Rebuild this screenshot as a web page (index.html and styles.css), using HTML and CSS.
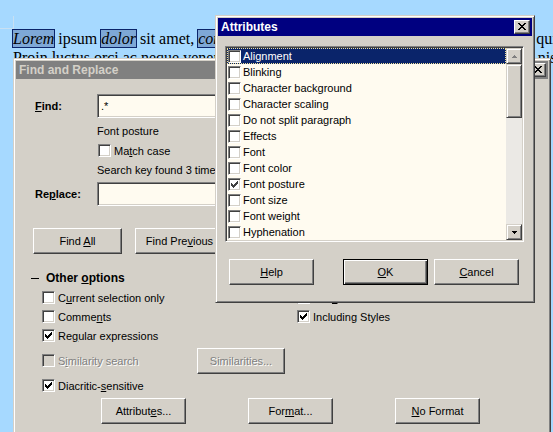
FILE: index.html
```html
<!DOCTYPE html>
<html>
<head>
<meta charset="utf-8">
<title>Find and Replace</title>
<link rel="stylesheet" href="styles.css">
</head>
<body>
<div class="doc">
  <div class="corner"></div>
  <p class="text"><span class="hl">Lorem</span> ipsum <span class="hl">dolor</span> sit amet, <span class="hl">consectetur</span> adipiscing elit. Nullam dapibus, ut diam quis<br>Proin luctus orci ac neque venenatis, vel vehicula leo mattis vitae. Aenean lacinia nisi</p>
</div>

<div class="win fr">
  <div class="title inactive">
    <span class="title-text">Find and Replace</span>
    <span class="xbtn"><svg width="8" height="7" viewBox="0 0 8 7"><path d="M0 0h2v1H0zM6 0h2v1H6zM1 1h2v1H1zM5 1h2v1H5zM2 2h4v1H2zM3 3h2v1H3zM2 4h4v1H2zM1 5h2v1H1zM5 5h2v1H5zM0 6h2v1H0zM6 6h2v1H6z" fill="#000"/></svg></span>
  </div>
  <div class="fr-body">
    <div class="field-row first">
      <span class="lbl"><u>F</u>ind:</span>
      <div class="field"><span>.*</span></div>
    </div>
    <div class="sub">
      <div class="note n1">Font posture</div>
      <div class="inline-checks">
        <span class="cb-item"><span class="cb"></span><span>Ma<u>t</u>ch case</span></span>
        <span class="cb-item dis"><span class="cb"></span><span>Whole words only</span></span>
      </div>
      <div class="note n2">Search key found 3 times</div>
    </div>
    <div class="field-row second">
      <span class="lbl">Re<u>p</u>lace:</span>
      <div class="field"></div>
    </div>
    <div class="btn-row">
      <div class="btn w89"><span>Find <u>A</u>ll</span></div>
      <div class="btn w89"><span>Find Pre<u>v</u>ious</span></div>
      <div class="btn w89"><span>Find <u>N</u>ext</span></div>
    </div>
    <div class="section"><span class="dash"></span><span>Other <u>o</u>ptions</span></div>
    <div class="opts">
      <span class="cb-item"><span class="cb"></span><span>C<u>u</u>rrent selection only</span></span>
      <span class="cb-item"><span class="cb"></span><span>Bac<u>k</u>wards</span></span>
      <span class="cb-item"><span class="cb"></span><span>Comme<u>n</u>ts</span></span>
      <span class="cb-item"><span class="cb checked"><svg width="13" height="13" viewBox="0 0 13 13"><path d="M9 3h1v3H9v1H8v1H7v1H6v1H5v-1H4V8H3V5h1v1h1v1h1V6h1V5h1V4h1z" fill="#000"/></svg></span><span>Including Styles</span></span>
      <span class="cb-item"><span class="cb checked"><svg width="13" height="13" viewBox="0 0 13 13"><path d="M9 3h1v3H9v1H8v1H7v1H6v1H5v-1H4V8H3V5h1v1h1v1h1V6h1V5h1V4h1z" fill="#000"/></svg></span><span>Re<u>g</u>ular expressions</span></span>
      <span></span>
      <div class="sim-row">
        <span class="cb-item dis sim"><span class="cb"></span><span>S<u>i</u>milarity search</span></span>
        <div class="btn dis w88"><span>Similarities...</span></div>
      </div>
      <span class="cb-item full"><span class="cb checked"><svg width="13" height="13" viewBox="0 0 13 13"><path d="M9 3h1v3H9v1H8v1H7v1H6v1H5v-1H4V8H3V5h1v1h1v1h1V6h1V5h1V4h1z" fill="#000"/></svg></span><span>Diacritic-<u>s</u>ensitive</span></span>
    </div>
    <div class="bottom-btns">
      <div class="btn w85"><span>Attribut<u>e</u>s...</span></div>
      <div class="btn w85"><span>For<u>m</u>at...</span></div>
      <div class="btn w85"><span><u>N</u>o Format</span></div>
    </div>
  </div>
</div>

<div class="win attr">
  <div class="title active">
    <span class="title-text">Attributes</span>
    <span class="xbtn"><svg width="8" height="7" viewBox="0 0 8 7"><path d="M0 0h2v1H0zM6 0h2v1H6zM1 1h2v1H1zM5 1h2v1H5zM2 2h4v1H2zM3 3h2v1H3zM2 4h4v1H2zM1 5h2v1H1zM5 5h2v1H5zM0 6h2v1H0zM6 6h2v1H6z" fill="#000"/></svg></span>
  </div>
  <div class="attr-body">
    <div class="listbox">
      <div class="items">
        <div class="item sel"><span class="cb"></span><span>Alignment</span></div>
        <div class="item"><span class="cb"></span><span>Blinking</span></div>
        <div class="item"><span class="cb"></span><span>Character background</span></div>
        <div class="item"><span class="cb"></span><span>Character scaling</span></div>
        <div class="item"><span class="cb"></span><span>Do not split paragraph</span></div>
        <div class="item"><span class="cb"></span><span>Effects</span></div>
        <div class="item"><span class="cb"></span><span>Font</span></div>
        <div class="item"><span class="cb"></span><span>Font color</span></div>
        <div class="item"><span class="cb checked"><svg width="13" height="13" viewBox="0 0 13 13"><path d="M9 3h1v3H9v1H8v1H7v1H6v1H5v-1H4V8H3V5h1v1h1v1h1V6h1V5h1V4h1z" fill="#404040"/></svg></span><span>Font posture</span></div>
        <div class="item"><span class="cb"></span><span>Font size</span></div>
        <div class="item"><span class="cb"></span><span>Font weight</span></div>
        <div class="item"><span class="cb"></span><span>Hyphenation</span></div>
      </div>
      <div class="scrollbar">
        <div class="sb-btn"><svg width="5" height="3" viewBox="0 0 5 3"><path d="M2 0h1v1h1v1h1v1H0V2h1V1h1z" fill="#808080"/></svg></div>
        <div class="sb-thumb"></div>
        <div class="sb-track"></div>
        <div class="sb-btn"><svg width="5" height="3" viewBox="0 0 5 3"><path d="M0 0h5v1H4v1H3v1H2V2H1V1H0z" fill="#000"/></svg></div>
      </div>
    </div>
    <div class="attr-btns">
      <div class="btn w85"><span><u>H</u>elp</span></div>
      <div class="btn default w85 ok"><span><u>O</u>K</span></div>
      <div class="btn w85"><span><u>C</u>ancel</span></div>
    </div>
  </div>
</div>
</body>
</html>
```

FILE: styles.css
```css
html, body {
  margin: 0;
  padding: 0;
}
body {
  width: 553px;
  height: 432px;
  overflow: hidden;
  position: relative;
  background: #a6d9ff;
  font-family: "Liberation Sans", Arial, sans-serif;
  font-size: 11px;
  color: #000;
}
u { text-decoration: underline; }

/* document */
.doc { padding-top: 16px; }
.corner {
  width: 13px;
  height: 12px;
  border-right: 1px solid #c8e0f2;
  border-bottom: 1px solid #c8e0f2;
}
.text {
  margin: 0 0 0 13px;
  font-family: "Liberation Serif", "Times New Roman", serif;
  font-size: 16px;
  line-height: 19px;
  white-space: nowrap;
}
.hl {
  font-style: italic;
  background: #7ea8d6;
  outline: 1px solid #0a246a;
}

/* windows */
.win {
  position: absolute;
  box-sizing: border-box;
  background: #d4d0c8;
  border: 1px solid;
  border-color: #d4d0c8 #404040 #404040 #d4d0c8;
  box-shadow: inset 1px 1px #fff, inset -1px -1px #808080;
  padding: 2px;
}
.fr { left: 13px; top: 58px; width: 538px; height: 384px; }
.attr { left: 215px; top: 15px; width: 320px; height: 288px; }

.title {
  height: 18px;
  display: flex;
  align-items: center;
  justify-content: space-between;
  padding: 0 2px 0 2px;
  font-weight: bold;
  font-size: 12px;
}
.title.active { background: #000080; color: #fff; }
.title.inactive { background: #808080; color: #d4d0c8; }
.title-text { padding-left: 1px; }

.xbtn {
  box-sizing: border-box;
  width: 16px;
  height: 14px;
  background: #d4d0c8;
  border: 1px solid;
  border-color: #fff #404040 #404040 #fff;
  box-shadow: inset -1px -1px #808080;
  display: flex;
  align-items: center;
  justify-content: center;
  padding-bottom: 1px;
}
.xbtn svg { display: block; }

/* checkboxes */
.cb {
  box-sizing: border-box;
  width: 13px;
  height: 13px;
  flex: none;
  background: #fff;
  border: 1px solid;
  border-color: #808080 #fff #fff #808080;
  box-shadow: inset 1px 1px #404040, inset -1px -1px #d4d0c8;
  position: relative;
}
.cb svg { position: absolute; left: -1px; top: -1px; display: block; }
.cb-item {
  display: flex;
  align-items: center;
  gap: 3px;
  white-space: nowrap;
}
.dis { color: #808080; text-shadow: 1px 1px #fff; }
.dis .cb { background: #d4d0c8; }

/* buttons */
.btn {
  box-sizing: border-box;
  height: 26px;
  display: flex;
  align-items: center;
  justify-content: center;
  background: #d4d0c8;
  border: 1px solid;
  border-color: #fff #404040 #404040 #fff;
  box-shadow: inset -1px -1px #808080;
  white-space: nowrap;
  flex: none;
}
.btn.default {
  border-color: #000;
  box-shadow: inset 1px 1px #fff, inset -1px -1px #404040, inset -2px -2px #808080;
}
.w85 { width: 85px; }
.w88 { width: 88px; }
.w89 { width: 89px; }

/* find & replace body */
.fr-body { position: relative; }
.field-row {
  display: flex;
  align-items: center;
  height: 24px;
  margin-left: 19px;
}
.field-row.first { margin-top: 15px; }
.field-row.second { margin-top: 5px; }
.lbl { width: 62px; font-weight: bold; flex: none; }
.field {
  box-sizing: border-box;
  width: 340px;
  height: 24px;
  background: #fffbf0;
  border: 1px solid;
  border-color: #808080 #fff #fff #808080;
  box-shadow: inset 1px 1px #404040, inset -1px -1px #d4d0c8;
  padding: 0 3px;
  display: flex;
  align-items: center;
}
.sub { margin-left: 81px; }
.note { height: 13px; line-height: 13px; white-space: nowrap; }
.note.n1 { margin-top: 7px; }
.note.n2 { margin-top: 7px; }
.inline-checks {
  display: flex;
  gap: 73px;
  height: 13px;
  margin-top: 6px;
  margin-left: 1px;
}
.btn-row {
  display: flex;
  gap: 13px;
  margin: 22px 0 0 17px;
  height: 26px;
}
.section {
  display: flex;
  align-items: center;
  height: 14px;
  margin: 17px 0 0 15px;
  font-weight: bold;
  font-size: 12px;
}
.dash {
  width: 8px;
  height: 1px;
  background: #000;
  margin-right: 7px;
}
.opts {
  display: grid;
  grid-template-columns: 255px 200px;
  grid-template-rows: 19px 19px 19px 31px 19px;
  margin: 3px 0 0 26px;
}
.sim-row {
  grid-column: 1 / 3;
  display: flex;
  align-items: center;
}
.sim { width: 155px; }
.full { grid-column: 1 / 3; }
.bottom-btns {
  display: flex;
  gap: 62px;
  margin: 3px 0 0 85px;
}

/* attributes body */
.attr-body { padding: 10px 0 0 7px; }
.listbox {
  box-sizing: border-box;
  width: 299px;
  height: 196px;
  background: #fffbf0;
  border: 1px solid;
  border-color: #808080 #fff #fff #808080;
  box-shadow: inset 1px 1px #404040, inset -1px -1px #d4d0c8;
  padding: 1px;
  display: flex;
}
.items { flex: 1; }
.item {
  height: 16px;
  box-sizing: border-box;
  display: flex;
  align-items: flex-start;
  gap: 2px;
  padding: 2px 0 0 1px;
  white-space: nowrap;
  line-height: 13px;
}
.item.sel {
  background: #0a246a;
  color: #fff;
  outline: 1px dotted #f2e39a;
  outline-offset: -1px;
}
.scrollbar {
  width: 16px;
  display: flex;
  flex-direction: column;
}
.sb-btn, .sb-thumb {
  box-sizing: border-box;
  background: #d4d0c8;
  border: 1px solid;
  border-color: #d4d0c8 #404040 #404040 #d4d0c8;
  box-shadow: inset 1px 1px #fff, inset -1px -1px #808080;
}
.sb-btn {
  height: 16px;
  display: flex;
  align-items: center;
  justify-content: center;
}
.sb-btn svg { display: block; }
.sb-thumb { height: 54px; }
.sb-track { flex: 1; background: #ebe9e5; }
.attr-btns {
  display: flex;
  margin: 17px 0 0 4px;
}
.attr-btns .ok { margin-left: 29px; margin-right: 6px; }
```
